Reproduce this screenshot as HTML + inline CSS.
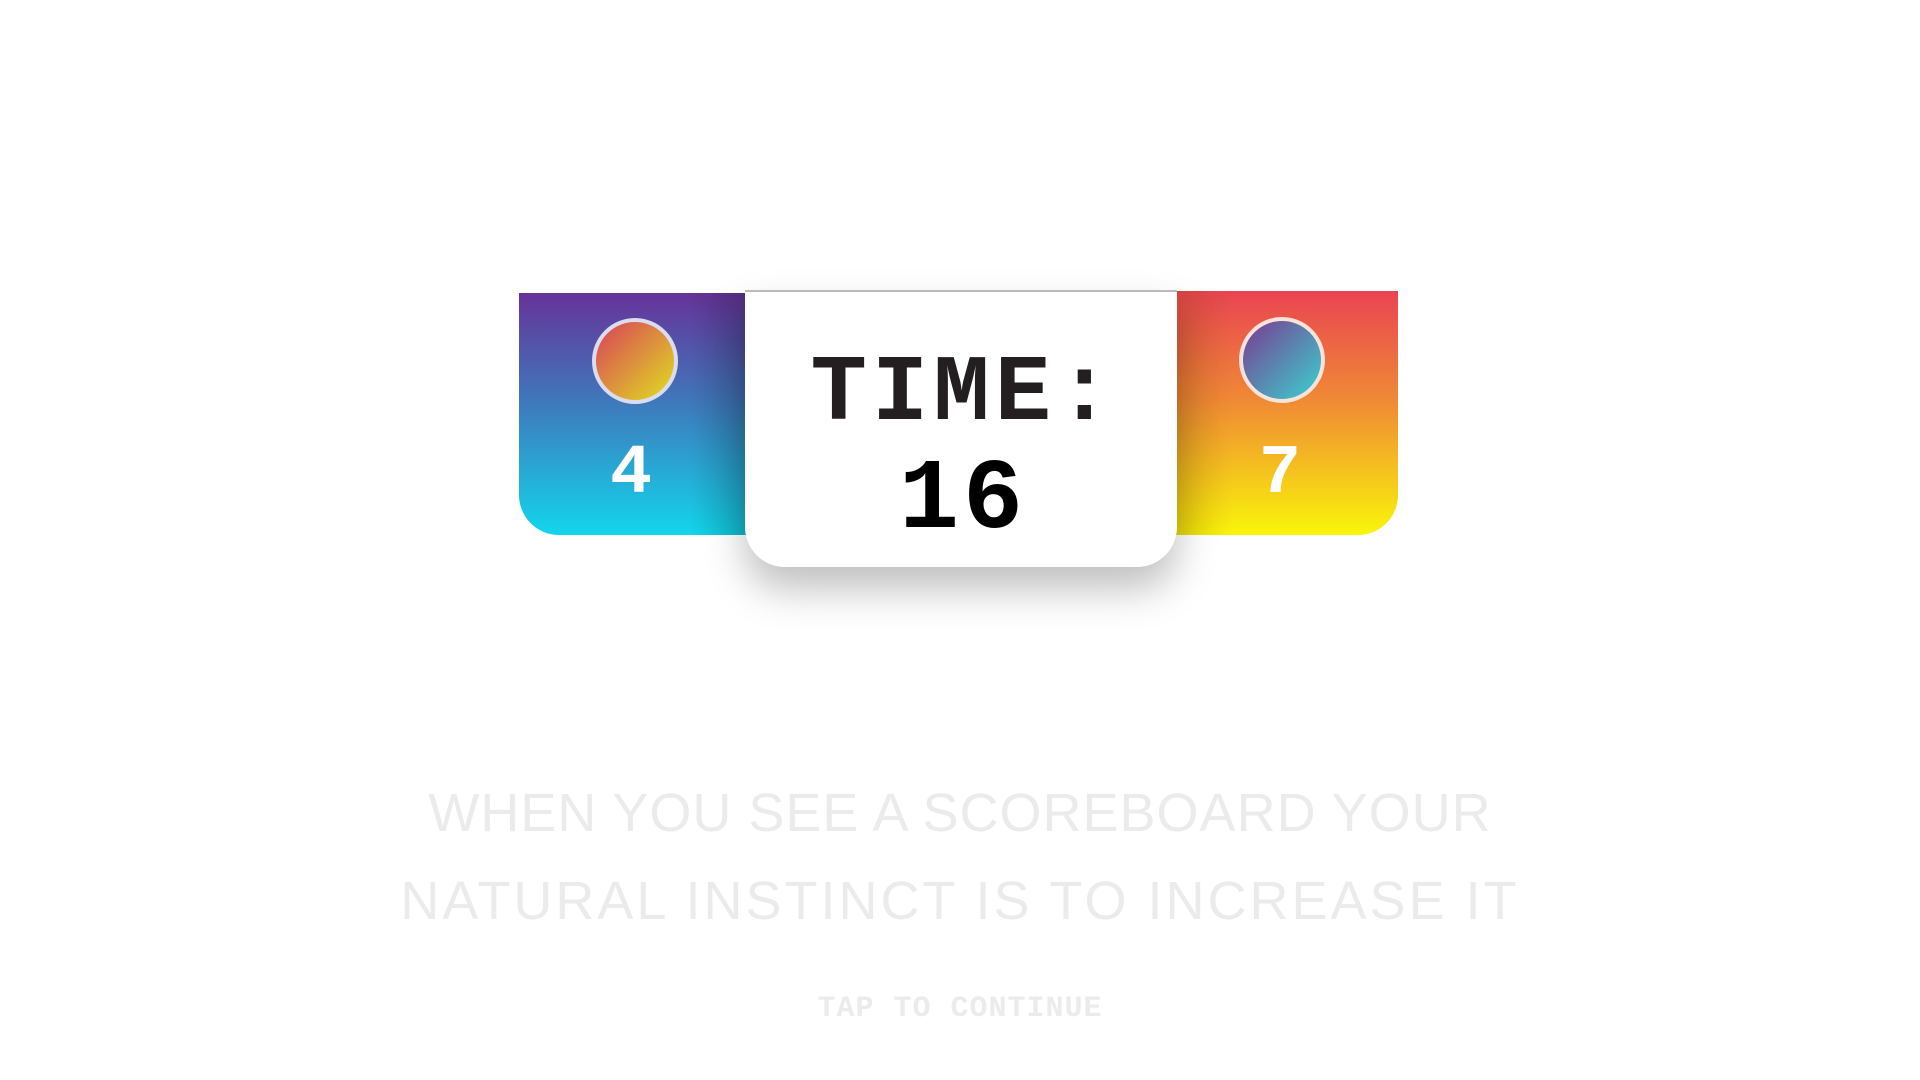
<!DOCTYPE html>
<html><head><style>
body{margin:0;width:1920px;height:1080px;background:#fff;position:relative;overflow:hidden;font-family:"Liberation Mono",monospace}
.p{position:absolute}
#l{left:519px;top:293px;width:230px;height:242px;border-radius:0 0 0 40px;background:linear-gradient(180deg,#663399 0%,#3f78bb 45%,#12d6ec 100%)}
#l:after{content:"";position:absolute;right:0;top:0;width:60px;height:100%;background:linear-gradient(90deg,rgba(0,0,0,0),rgba(0,0,0,.18))}
#r{left:1173px;top:291px;width:225px;height:244px;border-radius:0 0 40px 0;background:linear-gradient(180deg,#e94452 0%,#f08a35 45%,#f9f50a 100%)}
#r:after{content:"";position:absolute;left:0;top:0;width:60px;height:100%;background:linear-gradient(270deg,rgba(0,0,0,0),rgba(120,60,0,.18))}
#c{left:745px;top:290px;width:432px;height:277px;background:#fff;border-radius:0 0 40px 40px;box-shadow:0 22px 40px rgba(0,0,0,.25);border-top:2px solid #bbb;box-sizing:border-box;text-align:center;font-weight:bold;color:#231f20;font-size:96px;line-height:1}
.circ{position:absolute;width:78px;height:78px;border-radius:50%;border:4px solid #dcdcf0}
.num{position:absolute;width:100px;text-align:center;color:#fff;font-weight:bold;font-size:70px;line-height:1}
.t{position:absolute;left:0;width:1920px;text-align:center;color:#ebebeb;font-family:"Liberation Sans",sans-serif}
</style></head><body>
<div class="p" id="l"></div>
<div class="p" id="r"></div>
<div class="circ" style="left:592px;top:318px;background:linear-gradient(135deg,#d8405a,#e0e020)"></div>
<div class="circ" style="left:1239px;top:317px;border-color:#fbe3da;background:linear-gradient(135deg,#7a3a90,#3ad2d0)"></div>
<div class="num" style="left:581px;top:440px">4</div>
<div class="num" style="left:1230px;top:440px">7</div>
<div class="p" id="c">
<div style="position:absolute;left:6px;right:0;top:56px;letter-spacing:5px;font-size:94px">TIME:</div>
<div style="position:absolute;left:4px;right:0;top:160px;color:#000;letter-spacing:4px;font-size:100px">16</div>
</div>
<div class="t" style="top:782px;font-size:54px;letter-spacing:1px">WHEN YOU SEE A SCOREBOARD YOUR</div>
<div class="t" style="top:870px;font-size:54px;letter-spacing:3px">NATURAL INSTINCT IS TO INCREASE IT</div>
<div class="t" style="top:992px;font-size:30px;font-family:'Liberation Mono',monospace;font-weight:bold;letter-spacing:1px">TAP TO CONTINUE</div>
</body></html>
